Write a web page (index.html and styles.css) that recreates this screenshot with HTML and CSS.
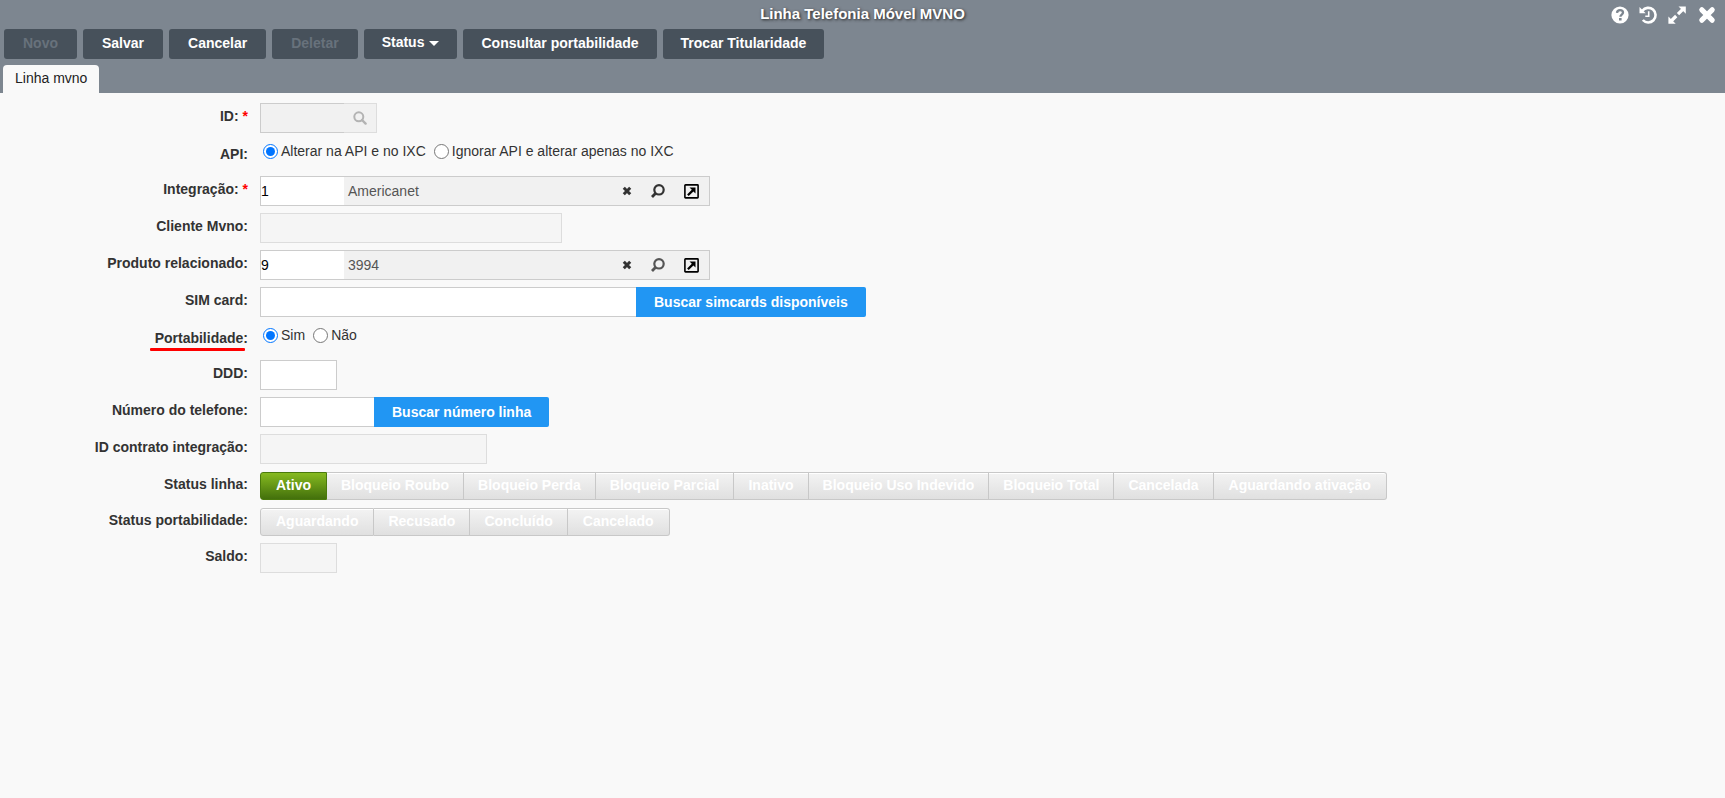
FILE: index.html
```html
<!DOCTYPE html>
<html lang="pt-BR">
<head>
<meta charset="utf-8">
<title>Linha Telefonia Móvel MVNO</title>
<link rel="stylesheet" href="styles.css">
</head>
<body>
<svg class="sprite" aria-hidden="true">
  <symbol id="search" viewBox="0 0 14 14"><circle cx="5.8" cy="5.8" r="4.5" fill="none" stroke="currentColor" stroke-width="2"/><path d="M9 9l3.6 3.6" stroke="currentColor" stroke-width="2.4" stroke-linecap="round"/></symbol>
  <symbol id="lens" viewBox="0 0 14 14"><circle cx="8" cy="5.8" r="4.700" fill="none" stroke="currentColor" stroke-width="2.200"/><path d="M4.900 9L1 12.900" stroke="currentColor" stroke-width="2.800"/></symbol>
  <symbol id="times" viewBox="0 0 16 16"><path d="M3.4 3.4l9.2 9.2M12.6 3.4l-9.2 9.2" stroke="currentColor" stroke-width="4.6" stroke-linecap="round"/></symbol>
  <symbol id="clear" viewBox="0 0 12 12"><path d="M2.800 2.800l6.400 6.400M9.200 2.800l-6.400 6.400" stroke="currentColor" stroke-width="3"/></symbol>
  <symbol id="external" viewBox="0 0 15 15"><rect x="0.900" y="0.900" width="13.200" height="13" rx="0.6" fill="none" stroke="currentColor" stroke-width="1.600"/><path d="M5.500 3.500h6v6L9.400 7.400l-4.700 4.700-1.600-1.600 4.700-4.700z" fill="currentColor"/></symbol>
</svg>
<header class="header">
  <div class="titlebar">
    <h1 class="title">Linha Telefonia Móvel MVNO</h1>
    <div class="window-actions">
      <button class="icon-btn" type="button" aria-label="Ajuda"><svg width="18" height="18" viewBox="0 0 18 18"><circle cx="9" cy="9" r="8.600" fill="#fff"/><path d="M6 6.900C6.200 4.900 7.400 4.200 9 4.200c1.700 0 3 .9 3 2.400 0 2-2.600 2-2.600 4.200" fill="none" stroke="#7d8690" stroke-width="2.300"/><rect x="8" y="12" width="2.600" height="2.500" fill="#7d8690"/></svg></button>
      <button class="icon-btn" type="button" aria-label="Histórico"><svg width="18" height="18" viewBox="1 0 18 18"><path d="M3.400 4.800A7.300 7.300 0 1 1 3.800 14" fill="none" stroke="#fff" stroke-width="2.600"/><path d="M.5 1v6.200h6.200z" fill="#fff"/><path d="M9.700 5.300v4.900H6.300" fill="none" stroke="#fff" stroke-width="1.600"/></svg></button>
      <button class="icon-btn" type="button" aria-label="Expandir"><svg width="18" height="18" viewBox="1 0 18 18"><path d="M10.500 .4h7.300v7.300zM.4 10.500v7.300h7.300z" fill="#fff"/><path d="M15 3.200l-5 5M3.200 15l5-5" stroke="#fff" stroke-width="3.200"/></svg></button>
      <button class="icon-btn" type="button" aria-label="Fechar"><svg width="18" height="18"><use href="#times"/></svg></button>
    </div>
  </div>
  <div class="toolbar">
    <button class="tool" type="button" disabled>Novo</button>
    <button class="tool" type="button">Salvar</button>
    <button class="tool" type="button">Cancelar</button>
    <button class="tool" type="button" disabled>Deletar</button>
    <button class="tool tool-menu" type="button">Status<span class="caret"></span></button>
    <button class="tool tool-wide" type="button">Consultar portabilidade</button>
    <button class="tool tool-wide" type="button">Trocar Titularidade</button>
  </div>
  <nav class="tabs"><a class="tab" href="#linha">Linha mvno</a></nav>
</header>
<main class="form" id="linha">
  <div class="row">
    <label class="label" for="id">ID: <span class="required">*</span></label>
    <div class="field">
      <input class="input input-id" id="id" type="text" disabled><button class="id-search" type="button" aria-label="Buscar ID" disabled><svg width="14" height="14"><use href="#search"/></svg></button>
    </div>
  </div>
  <div class="row row-radio" role="radiogroup" aria-labelledby="api-label">
    <span class="label" id="api-label">API:</span>
    <div class="field radios">
      <label class="radio"><input type="radio" name="api" checked>Alterar na API e no IXC</label>
      <label class="radio"><input type="radio" name="api">Ignorar API e alterar apenas no IXC</label>
    </div>
  </div>
  <div class="row">
    <label class="label" for="integracao">Integração: <span class="required">*</span></label>
    <div class="field lookup">
      <input class="lookup-code" id="integracao" type="text" value="1"><output class="lookup-name" for="integracao">Americanet</output>
      <button class="lookup-btn" type="button" aria-label="Limpar"><svg width="12" height="12"><use href="#clear"/></svg></button>
      <button class="lookup-btn" type="button" aria-label="Pesquisar"><svg width="14" height="14"><use href="#lens"/></svg></button>
      <button class="lookup-btn lookup-open" type="button" aria-label="Abrir"><svg width="15" height="15"><use href="#external"/></svg></button>
    </div>
  </div>
  <div class="row">
    <label class="label" for="cliente">Cliente Mvno:</label>
    <div class="field"><input class="input w-client" id="cliente" type="text" disabled></div>
  </div>
  <div class="row">
    <label class="label" for="produto">Produto relacionado:</label>
    <div class="field lookup">
      <input class="lookup-code" id="produto" type="text" value="9"><output class="lookup-name" for="produto">3994</output>
      <button class="lookup-btn" type="button" aria-label="Limpar"><svg width="12" height="12"><use href="#clear"/></svg></button>
      <button class="lookup-btn lookup-muted" type="button" aria-label="Pesquisar"><svg width="14" height="14"><use href="#lens"/></svg></button>
      <button class="lookup-btn lookup-open" type="button" aria-label="Abrir"><svg width="15" height="15"><use href="#external"/></svg></button>
    </div>
  </div>
  <div class="row">
    <label class="label" for="sim">SIM card:</label>
    <div class="field"><input class="input w-sim" id="sim" type="text"><button class="action" type="button">Buscar simcards disponíveis</button></div>
  </div>
  <div class="row row-radio" role="radiogroup" aria-labelledby="port-label">
    <span class="label"><span class="marked" id="port-label">Portabilidade:</span></span>
    <div class="field radios">
      <label class="radio"><input type="radio" name="port" checked>Sim</label>
      <label class="radio"><input type="radio" name="port">Não</label>
    </div>
  </div>
  <div class="row">
    <label class="label" for="ddd">DDD:</label>
    <div class="field"><input class="input w-short" id="ddd" type="text"></div>
  </div>
  <div class="row">
    <label class="label" for="numero">Número do telefone:</label>
    <div class="field"><input class="input w-phone" id="numero" type="text"><button class="action" type="button">Buscar número linha</button></div>
  </div>
  <div class="row">
    <label class="label" for="contrato">ID contrato integração:</label>
    <div class="field"><input class="input w-contract" id="contrato" type="text" disabled></div>
  </div>
  <div class="row row-segments" role="group" aria-labelledby="sl">
    <span class="label" id="sl">Status linha:</span>
    <div class="field segments">
      <button class="segment segment-on" type="button">Ativo</button><button class="segment" type="button" disabled>Bloqueio Roubo</button><button class="segment" type="button" disabled>Bloqueio Perda</button><button class="segment" type="button" disabled>Bloqueio Parcial</button><button class="segment" type="button" disabled>Inativo</button><button class="segment" type="button" disabled>Bloqueio Uso Indevido</button><button class="segment" type="button" disabled>Bloqueio Total</button><button class="segment" type="button" disabled>Cancelada</button><button class="segment" type="button" disabled>Aguardando ativação</button>
    </div>
  </div>
  <div class="row row-segments" role="group" aria-labelledby="sp">
    <span class="label" id="sp">Status portabilidade:</span>
    <div class="field segments">
      <button class="segment" type="button" disabled>Aguardando</button><button class="segment" type="button" disabled>Recusado</button><button class="segment" type="button" disabled>Concluído</button><button class="segment" type="button" disabled>Cancelado</button>
    </div>
  </div>
  <div class="row">
    <label class="label" for="saldo">Saldo:</label>
    <div class="field"><input class="input w-short" id="saldo" type="text" disabled></div>
  </div>
</main>
</body>
</html>
```
FILE: styles.css
```css
* { box-sizing: border-box; }
body {
  margin: 0;
  background: #f9f9f9;
  color: #333;
  font: 14px/18px "Liberation Sans", Arial, sans-serif;
}
button, input { font: inherit; margin: 0; }
button { border: 0; cursor: pointer; }
svg { display: block; overflow: visible; }
.sprite { position: absolute; width: 0; height: 0; }

.header { background: #7d8690; }
.titlebar {
  display: grid;
  grid-template-columns: 1fr auto 1fr;
  align-items: center;
  height: 29px;
  padding: 0 9px;
}
.title {
  grid-column: 2;
  margin: 0;
  padding-bottom: 2px;
  color: #fff;
  font-size: 15px;
  text-shadow: 1px 1px 3px #222;
}
.window-actions { display: flex; justify-content: flex-end; gap: 11px; }
.icon-btn { padding: 0; background: none; color: #fff; }

.toolbar { display: flex; gap: 6px; padding: 0 4px; }
.tool {
  height: 30px;
  padding: 0 19px 2px;
  border-radius: 3px;
  background: #47515b;
  color: #fff;
  font-weight: bold;
}
.tool:disabled { color: #68727c; }
.tool-menu { padding: 0 18px 4px; }
.tool-wide { padding: 0 18px 2px; }
.caret {
  display: inline-block;
  margin-left: 5px;
  border: 5px solid transparent;
  border-top: 5px solid #fff;
  border-bottom: 0;
  vertical-align: middle;
}
.tabs { display: flex; padding: 6px 3px 0; }
.tab {
  height: 28px;
  padding: 4px 12px 0;
  border-radius: 4px 4px 0 0;
  background: #f9f9f9;
  color: #222;
  text-decoration: none;
}

.form { display: grid; gap: 7px; padding-top: 10px; }
.row {
  display: grid;
  grid-template-columns: 248px 1fr;
  column-gap: 12px;
  align-items: center;
  height: 30px;
}
.row-radio, .row-segments { height: 29px; }
.label { font-weight: bold; text-align: right; padding-bottom: 4px; }
.row-radio .label { padding-bottom: 2px; }
.required { color: #f00; }
.field { display: flex; align-items: center; }
.input {
  height: 30px;
  padding: 0 4px;
  border: 1px solid #ccc;
  border-radius: 0;
  background: #fff;
}
.input:disabled { background: #f5f5f5; border-color: #ddd; }
.input-id { width: 84px; border-right: 0; }
.input-id:disabled { background: #f1f1f1; border-color: #ccc; }
.id-search {
  display: flex;
  align-items: center;
  height: 30px;
  width: 33px;
  padding: 0 9px;
  border: 1px solid #ddd;
  border-left: 0;
  background: #f1f1f1;
  color: #b3b3b3;
}
.w-client { width: 302px; }
.w-sim { width: 376px; border-right: 0; }
.w-short { width: 77px; }
.w-phone { width: 114px; border-right: 0; }
.w-contract { width: 227px; }
.action {
  height: 30px;
  padding: 0 18px;
  border-radius: 0 2px 2px 0;
  background: #2196f3;
  color: #fff;
  font-weight: bold;
}

.radios { gap: 8px; padding-bottom: 7px; }
.radio { display: flex; align-items: center; gap: 3px; }
.radio input { width: 15px; height: 15px; margin: 0; }
.radios .radio:first-child { padding-left: 3px; }

.lookup {
  width: 450px;
  height: 30px;
  border: 1px solid #ccc;
  background: #f1f1f1;
}
.lookup-code {
  width: 83px;
  height: 100%;
  padding: 0;
  border: 0;
  background: #fff;
  color: #000;
}
.lookup-name { flex: 1; padding-left: 4px; color: #555; }
.lookup-btn {
  display: flex;
  justify-content: center;
  align-items: center;
  width: 31px;
  height: 28px;
  padding: 0;
  background: none;
  color: #333;
}
.lookup-muted { color: #555; }
.lookup-open { width: 36px; color: #000; }

.marked { position: relative; }
.marked::after {
  content: "";
  position: absolute;
  left: -5px;
  right: 3px;
  bottom: -5px;
  height: 3px;
  border-radius: 1px;
  background: #f00;
}

.segment {
  height: 28px;
  padding: 0 14px 2px;
  border: 1px solid #c8c8c8;
  border-left-width: 0;
  background: linear-gradient(#f3f3f3, #e0e0e0);
  box-shadow: inset 0 1px #fff;
  color: #fff;
  font-weight: bold;
}
.segment:first-child { padding: 0 15px 2px; border-left-width: 1px; border-radius: 3px 0 0 3px; }
.segment:last-child { padding: 0 15px 2px; border-radius: 0 3px 3px 0; }
.segment-on {
  border-color: #4a7a0c;
  background: linear-gradient(#86ba20, #43700c);
  box-shadow: none;
}
```
